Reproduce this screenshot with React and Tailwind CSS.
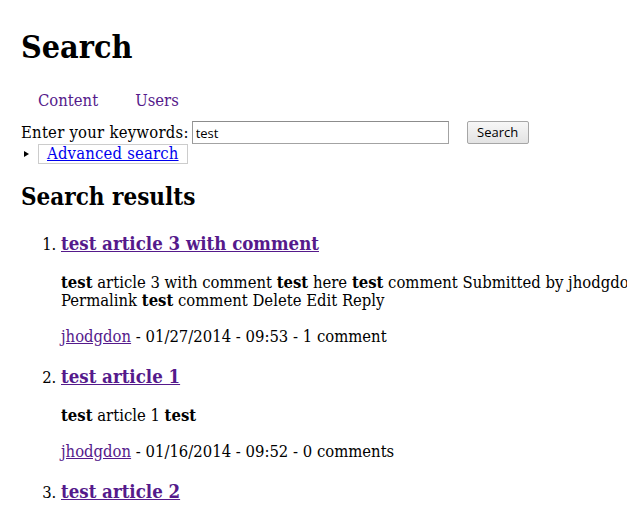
const results = [
    {
        title: 'test article 3 with comment',
        lines: [
            <>
                <b>test</b> article 3 with comment <b>test</b> here <b>test</b> comment Submitted by jhodgdon on Mon, 01/27/2014 - 09:53
            </>,
            <>
                Permalink <b>test</b> comment Delete Edit Reply
            </>,
        ],
        date: '01/27/2014 - 09:53',
        comments: '1 comment',
    },
    {
        title: 'test article 1',
        lines: [
            <>
                <b>test</b> article 1 <b>test</b>
            </>,
        ],
        date: '01/16/2014 - 09:52',
        comments: '0 comments',
    },
    { title: 'test article 2' },
];

const App = () => {
    return (
        <div className="h-[520px] overflow-hidden bg-white text-black pl-[21px] pt-[27px] font-['DejaVu_Serif',serif] font-stretch-condensed text-[16.5px]">
            <h1 className="text-[32px] font-bold leading-[40px]">Search</h1>

            {/* tabs */}
            <ul className="flex pl-[17px] mt-[24px] text-[#551a8b] leading-[20px]">
                <li className="mr-[37px]">Content</li>
                <li>Users</li>
            </ul>

            <form className="mt-[10px]">
                <div className="flex items-center h-[23px]">
                    <label htmlFor="keys" className="whitespace-nowrap leading-[23px] tracking-[0.25px]">Enter your keywords:</label>
                    <input
                        id="keys"
                        type="text"
                        defaultValue="test"
                        className="ml-[3px] w-[257px] h-[23px] px-[3px] border border-[#a3a3a3] border-t-[#8c8c8c] border-l-[#999999] text-[13px] font-['Open_Sans',sans-serif] font-stretch-normal outline-none"
                    />
                    <button
                        type="button"
                        className="ml-[18px] w-[62px] h-[23px] border border-[#a6a6a6] rounded-[2px] bg-gradient-to-b from-[#f7f7f7] to-[#e3e3e3] text-[13px] font-['Open_Sans',sans-serif] font-stretch-normal"
                    >
                        Search
                    </button>
                </div>
                <div className="flex items-center h-[20px]">
                    <span className="w-0 h-0 ml-[3px] border-y-[3px] border-y-transparent border-l-[5px] border-l-black"></span>
                    <div className="ml-[9px] h-[20px] border border-[#cccccc] px-[8px] leading-[18px] tracking-[0.2px]">
                        <a href="#" className="text-[#0000ee] underline">Advanced search</a>
                    </div>
                </div>
            </form>

            <h2 className="mt-[18px] text-[24px] font-bold leading-[30px]">Search results</h2>

            <ol className="mt-[20px] pl-[40px] list-decimal">
                {results.map((r, i) => (
                    <li key={i} className="mb-[19px]">
                        <h3 className="text-[18.5px] font-bold leading-[24px]">
                            <a href="#" className="text-[#551a8b] underline">{r.title}</a>
                        </h3>
                        {r.lines && (
                            <>
                                <div className="mt-[18px] leading-[18px] whitespace-nowrap">
                                    {r.lines.map((line, j) => (
                                        <p key={j}>{line}</p>
                                    ))}
                                </div>
                                <p className="mt-[18px] leading-[18px]">
                                    <a href="#" className="text-[#551a8b] underline">jhodgdon</a> - {r.date} - {r.comments}
                                </p>
                            </>
                        )}
                    </li>
                ))}
            </ol>
        </div>
    );
};

export default App;
